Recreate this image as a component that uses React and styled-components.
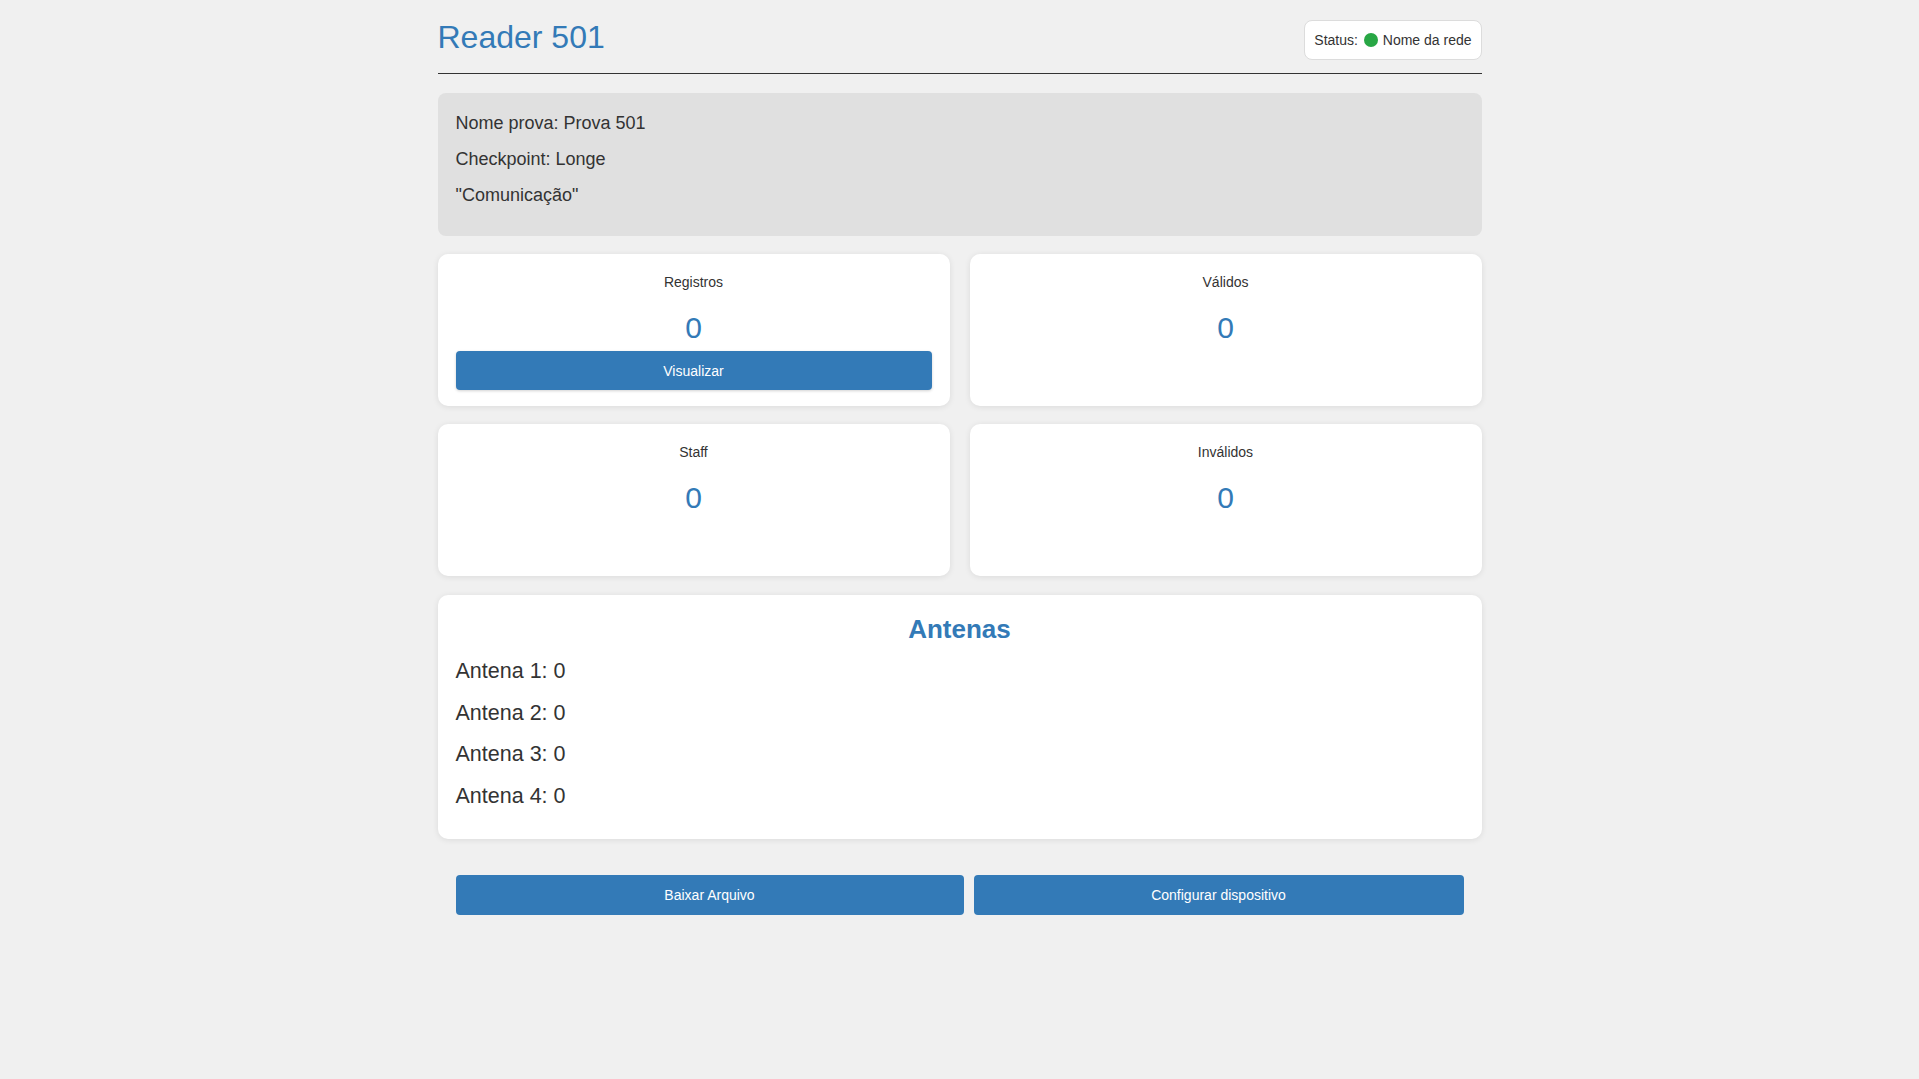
import styled, { createGlobalStyle } from "styled-components";

const GlobalStyle = createGlobalStyle`
  html, body {
    margin: 0;
    padding: 0;
    background: #f0f0f0;
    font-family: "Liberation Sans", Arial, sans-serif;
    color: #333;
  }
`;

const Container = styled.div`
  width: 1044px;
  margin: 0 auto;
  display: flex;
  flex-direction: column;
`;

const Header = styled.header`
  display: flex;
  justify-content: space-between;
  align-items: flex-start;
  padding: 20px 0 13px;
  border-bottom: 1px solid #333;

  h1 {
    margin: -1px 0 0;
    font-size: 32px;
    line-height: 37px;
    font-weight: normal;
    color: #337ab7;
  }
`;

const StatusPill = styled.div`
  display: flex;
  align-items: center;
  box-sizing: border-box;
  height: 40px;
  padding: 0 9px;
  background: #fff;
  border: 1px solid #dcdcdc;
  border-radius: 8px;
  font-size: 14px;
  color: #333;
  white-space: pre;
`;

const Dot = styled.span`
  display: inline-block;
  width: 14px;
  height: 14px;
  border-radius: 50%;
  background: ${({ $color }) => $color};
  margin: 0 5px 0 2px;
`;

const InfoBox = styled.section`
  margin-top: 19px;
  padding: 20px 18px 15px;
  background: #e0e0e0;
  border-radius: 8px;

  p {
    margin: 0 0 16px;
    font-size: 18px;
    line-height: 20px;
  }
`;

const StatsGrid = styled.div`
  margin-top: 18px;
  display: grid;
  grid-template-columns: 1fr 1fr;
  column-gap: 20px;
  row-gap: 18px;
`;

const Card = styled.div`
  background: #fff;
  border-radius: 10px;
  box-shadow: 0 1px 6px rgba(0, 0, 0, 0.09);
`;

const StatCard = styled(Card)`
  box-sizing: border-box;
  height: 152px;
  padding: 20px 18px 16px;
  display: flex;
  flex-direction: column;
  align-items: stretch;
  text-align: center;
`;

const StatLabel = styled.div`
  font-size: 14px;
  line-height: 16px;
  color: #333;
`;

const StatValue = styled.div`
  margin-top: 20px;
  font-size: 30px;
  line-height: 36px;
  color: #337ab7;
`;

const Button = styled.button`
  height: 40px;
  border: none;
  border-radius: 4px;
  background: #337ab7;
  color: #fff;
  font-family: "Liberation Sans", Arial, sans-serif;
  font-size: 14px;
  cursor: pointer;
  box-shadow: ${({ $raised }) =>
    $raised ? "0 1px 3px rgba(0, 0, 0, 0.18)" : "none"};
`;

const CardButton = styled(Button)`
  margin-top: 5px;
  width: 100%;
`;

const AntennaCard = styled(Card)`
  margin-top: 19px;
  padding: 19px 18px 15px;

  h2 {
    margin: 0 0 14px;
    text-align: center;
    font-size: 26px;
    line-height: 30px;
    font-weight: bold;
    color: #337ab7;
  }
`;

const AntennaRow = styled.div`
  font-size: 21.5px;
  line-height: 26px;
  margin-bottom: 15.6px;
  color: #333;
`;

const Actions = styled.div`
  margin-top: 36px;
  padding: 0 18px;
  display: grid;
  grid-template-columns: 508fr 490fr;
  gap: 10px;
`;

const stats = [
  { label: "Registros", value: 0, action: "Visualizar" },
  { label: "Válidos", value: 0 },
  { label: "Staff", value: 0 },
  { label: "Inválidos", value: 0 },
];

const antennas = [0, 0, 0, 0];

export default function App() {
  return (
    <>
      <GlobalStyle />
      <Container>
        <Header>
          <h1>Reader 501</h1>
          <StatusPill>
            Status: <Dot $color="#28a745" />
            Nome da rede
          </StatusPill>
        </Header>

        <InfoBox>
          <p>Nome prova: Prova 501</p>
          <p>Checkpoint: Longe</p>
          <p>"Comunicação"</p>
        </InfoBox>

        <StatsGrid>
          {stats.map((s) => (
            <StatCard key={s.label}>
              <StatLabel>{s.label}</StatLabel>
              <StatValue>{s.value}</StatValue>
              {s.action && <CardButton $raised>{s.action}</CardButton>}
            </StatCard>
          ))}
        </StatsGrid>

        <AntennaCard>
          <h2>Antenas</h2>
          {antennas.map((count, i) => (
            <AntennaRow key={i}>
              Antena {i + 1}: {count}
            </AntennaRow>
          ))}
        </AntennaCard>

        <Actions>
          <Button>Baixar Arquivo</Button>
          <Button>Configurar dispositivo</Button>
        </Actions>
      </Container>
    </>
  );
}
